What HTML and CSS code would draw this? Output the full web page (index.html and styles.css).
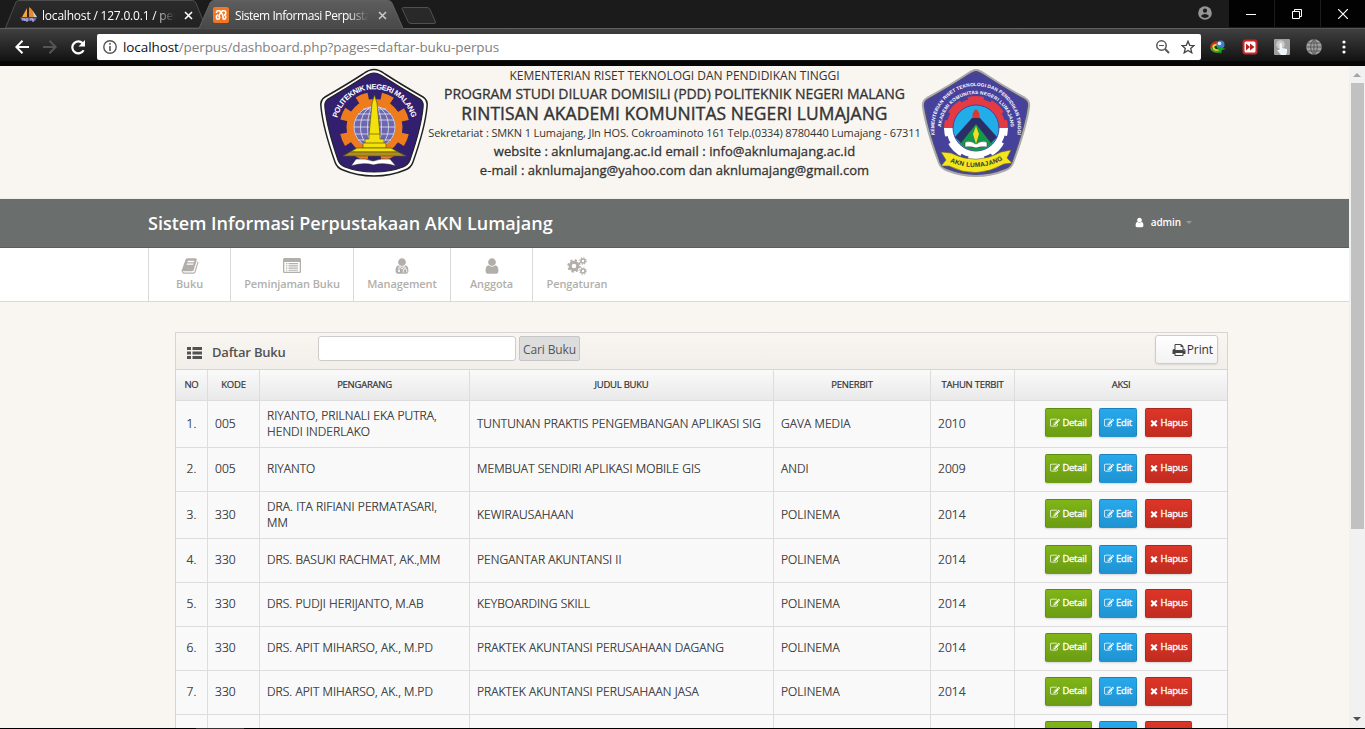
FILE: index.html
```html
<!DOCTYPE html>
<html lang="id">
<head>
<meta charset="utf-8">
<title>Sistem Informasi Perpustakaan</title>
<link rel="stylesheet" href="styles.css">
</head>
<body>
<svg class="defs" width="0" height="0">
  <symbol id="edit" viewBox="0 0 1792 1792"><path d="M888 1184l116-116-152-152-116 116v56h96v96h56zm440-720q-16-16-33 1l-350 350q-17 17-1 33t33-1l350-350q17-17 1-33zm80 594v190q0 119-84.5 203.5t-203.5 84.5h-832q-119 0-203.5-84.5t-84.5-203.5v-832q0-119 84.5-203.5t203.5-84.5h832q63 0 117 25 15 7 18 23 3 17-9 29l-49 49q-14 14-32 8-23-6-45-6h-832q-66 0-113 47t-47 113v832q0 66 47 113t113 47h832q66 0 113-47t47-113v-126q0-13 9-22l64-64q15-15 35-7t20 29zm-96-738l288 288-672 672h-288v-288zm444 132l-92 92-288-288 92-92q28-28 68-28t68 28l152 152q28 28 28 68t-28 68z"/></symbol>
  <symbol id="times" viewBox="0 0 1792 1792"><path d="M1490 1322q0 40-28 68l-136 136q-28 28-68 28t-68-28l-294-294-294 294q-28 28-68 28t-68-28l-136-136q-28-28-28-68t28-68l294-294-294-294q-28-28-28-68t28-68l136-136q28-28 68-28t68 28l294 294 294-294q28-28 68-28t68 28l136 136q28 28 28 68t-28 68l-294 294 294 294q28 28 28 68z"/></symbol>
  <symbol id="print" viewBox="0 0 1792 1792"><path d="M448 1536h896v-256h-896v256zm0-640h896v-384h-160q-40 0-68-28t-28-68v-160h-640v640zm1152 64q0-26-19-45t-45-19-45 19-19 45 19 45 45 19 45-19 19-45zm128 0v416q0 13-9.500 22.500t-22.500 9.500h-224v160q0 40-28 68t-68 28h-960q-40 0-68-28t-28-68v-160h-224q-13 0-22.500-9.500t-9.500-22.500v-416q0-79 56.500-135.500t135.500-56.500h64v-544q0-40 28-68t68-28h672q40 0 88 20t76 48l152 152q28 28 48 76t20 88v256h64q79 0 135.500 56.500t56.500 135.500z"/></symbol>
  <symbol id="user" viewBox="0 0 1792 1792"><path d="M1536 1399q0 109-62.500 187t-150.500 78h-854q-88 0-150.500-78t-62.500-187q0-85 8.500-160.500t31.500-152 58.500-131 94-89 134.500-34.500q131 128 313 128t313-128q76 0 134.500 34.500t94 89 58.500 131 31.500 152 8.500 160.500zm-256-887q0 159-112.500 271.500t-271.500 112.500-271.500-112.500-112.500-271.500 112.500-271.500 271.500-112.500 271.500 112.500 112.500 271.500z"/></symbol>
  <symbol id="book" viewBox="0 0 1792 1792"><path d="M1703 478q40 57 18 129l-275 906q-19 64-76.500 107.500t-122.500 43.500h-923q-77 0-148.500-53.500t-99.500-131.500q-24-67-2-127 0-4 3-27t4-37q1-8-3-21.500t-3-19.500q2-11 8-21t16.500-23.500 16.500-23.500q23-38 45-91.500t30-91.500q3-10 .5-30t-.5-28q3-11 17-28t17-23q21-36 42-92t25-90q1-9-2.500-32t.5-28q4-13 22-30.500t22-22.500q19-26 42.500-84.500t27.500-96.500q1-8-3-25.500t-2-26.500q2-8 9-18t18-23 17-21q8-12 16.500-30.500t15-35 16-36 19.500-32 26.500-23.500 36-11.500 47.500 5.500l-1 3q38-9 51-9h761q74 0 114 56t18 130l-274 906q-36 119-71.500 153.500t-128.500 34.500h-869q-27 0-38 15-11 16-1 43 24 70 144 70h923q29 0 56-15.500t35-41.500l300-987q7-22 5-57 38 15 59 43zm-1064 2q-4 13 2 22.500t20 9.500h608q13 0 25.500-9.500t16.500-22.500l21-64q4-13-2-22.500t-20-9.500h-608q-13 0-25.500 9.500t-16.500 22.500zm-83 256q-4 13 2 22.500t20 9.500h608q13 0 25.500-9.500t16.500-22.500l21-64q4-13-2-22.500t-20-9.500h-608q-13 0-25.500 9.500t-16.500 22.500z"/></symbol>
</svg>

<div class="browser">
  <div class="tabstrip">
    <svg class="tabshapes" width="1229" height="29" viewBox="0 0 1229 29">
      <defs>
        <linearGradient id="tabOn" x2="0" y2="1"><stop stop-color="#5e5e5e"/><stop offset="1" stop-color="#484848"/></linearGradient>
        <linearGradient id="tabOff" x2="0" y2="1"><stop stop-color="#2b2b2b"/><stop offset="1" stop-color="#222"/></linearGradient>
      </defs>
      <path d="M5.500 28L16 2Q17 .5 19 .5H192Q195 .5 196 3L206 28Z" fill="url(#tabOff)" stroke="#4c4c4c"/>
      <path d="M402 8.500Q402 7.500 404 7.500H427Q429 7.500 430 9.500L435.500 22Q436 23.500 434 23.500H411Q409 23.500 408 21.500Z" fill="#292929" stroke="#505050"/>
      <path d="M0 28.500H199L210 3Q211 .5 214 .5H388Q391 .5 392 3L403 28.500H1229" fill="url(#tabOn)" stroke="#606060"/>
    </svg>
    <div class="tab tab-a">
      <svg width="18" height="16" viewBox="0 0 18 16"><path d="M7 1L2 10H7Z" fill="#f5a33a"/><path d="M9 0V10H15Q14 3 9 0Z" fill="#e8892a"/><path d="M13 4L17 10H14Z" fill="#c7d0e0"/><path d="M0 10.500L2 14H15L17 10.500Z" fill="#6c6a9c"/><path d="M2 12h3v2M7 11v4M10 12h3v3" stroke="#c9c8e8" fill="none"/></svg>
      <span class="tabtitle">localhost / 127.0.0.1 / perpus</span>
      <svg class="x" width="9" height="9" viewBox="0 0 9 9"><path d="M1 1L8 8M8 1L1 8" stroke="#fff" stroke-width="1.600"/></svg>
    </div>
    <div class="tab tab-b">
      <svg width="16" height="16" viewBox="0 0 16 16"><rect width="16" height="16" rx="2" fill="#f37623"/><path d="M3.500 6V5.200Q3.500 3.800 5 3.800H6Q7 3.800 7.500 4.800L9.200 7Q10 8 10 10V10.500Q10 12.200 11.200 12.200T12.700 10.500V10Q12.700 8 11 8Q12.700 8 12.700 6V5.300Q12.700 3.800 11 3.800H10Q9 3.800 8.500 4.800L6.800 7Q6 8 6 10M5 8Q3.500 8 3.500 10V10.700Q3.500 12.200 5 12.200T6.500 10.700V9.500" stroke="#fff" stroke-width="1.600" fill="none"/></svg>
      <span class="tabtitle">Sistem Informasi Perpustakaan</span>
      <svg class="x" width="9" height="9" viewBox="0 0 9 9"><path d="M1 1L8 8M8 1L1 8" stroke="#ccc" stroke-width="1.500"/></svg>
    </div>
    <svg class="profile" width="14" height="14" viewBox="0 0 14 14"><circle cx="7" cy="7" r="6.800" fill="#969696"/><circle cx="7" cy="4.700" r="2.100" fill="#1b1b1b"/><path d="M2.800 10Q7 6 11.200 10Q7 14 2.800 10Z" fill="#1b1b1b"/></svg>
    <div class="win"><svg width="10" height="10"><path d="M0 5.500H10" stroke="#fff"/></svg></div>
    <div class="win"><svg width="10" height="10" fill="none" stroke="#fff"><path d="M.5 2.500H7.500V9.500H.5ZM2.500 2.500V.5H9.500V7.500H7.500"/></svg></div>
    <div class="win win-last"><svg width="10" height="10"><path d="M0 0L10 10M10 0L0 10" stroke="#fff" stroke-width="1.200"/></svg></div>
  </div>
  <div class="toolbar">
    <svg width="14" height="14" viewBox="0 0 14 14" fill="none" stroke="#fff" stroke-width="2"><path d="M14 7H1.500M7.500 .8L1.300 7L7.500 13.200"/></svg>
    <svg width="14" height="14" viewBox="0 0 14 14" fill="none" stroke="#555" stroke-width="2"><path d="M0 7H12.500M6.500 .8L12.700 7L6.500 13.200"/></svg>
    <svg width="15" height="15" viewBox="0 0 15 15"><path d="M12.600 10.200A6 6 0 1 1 11.700 3.200" fill="none" stroke="#fff" stroke-width="2.200"/><path d="M14 0V6.500H7.500Z" fill="#fff"/></svg>
    <div class="omnibox">
      <svg width="14" height="14" viewBox="0 0 14 14"><circle cx="7" cy="7" r="6.200" fill="none" stroke="#555" stroke-width="1.400"/><path d="M7 3V4.700M7 6V11" stroke="#555" stroke-width="1.600"/></svg>
      <span class="url"><b>localhost</b>/perpus/dashboard.php?pages=daftar-buku-perpus</span>
      <svg class="mag" width="14" height="14" viewBox="0 0 14 14" fill="none" stroke="#555"><circle cx="5.500" cy="5.500" r="4.700" stroke-width="1.500"/><path d="M9 9L13 13" stroke-width="2"/><path d="M3 5.500H8"/></svg>
      <svg width="14" height="14" viewBox="0 0 14 14"><path d="M7 1.200L8.700 5.300L13 5.600L9.700 8.400L10.800 12.800L7 10.400L3.200 12.800L4.300 8.400L1 5.600L5.300 5.300Z" fill="none" stroke="#444" stroke-width="1.300"/></svg>
    </div>
    <div class="exts">
      <svg width="16" height="14" viewBox="0 0 16 14"><path d="M7 2Q1 3 1.200 8" fill="none" stroke="#d92b20" stroke-width="2"/><path d="M7 4.500Q2.500 5 3.500 8T9 10" fill="none" stroke="#e9d22c" stroke-width="2.200"/><path d="M1 8Q3 13 10 11.500" fill="none" stroke="#35a735" stroke-width="2"/><circle cx="10.500" cy="4.500" r="4" fill="#3f7fd0"/><circle cx="9.500" cy="3.500" r="1.800" fill="#d9ecff"/><path d="M6 6L16 9L12 10L11 14Z" fill="#16a51d"/></svg>
      <svg width="16" height="16" viewBox="0 0 16 16"><rect x=".5" y=".5" width="15" height="15" rx="3" fill="#c92927"/><rect x="2.500" y="2.500" width="11" height="11" rx="1.500" fill="#fff"/><path d="M4 4.500L8 8L4 11.500ZM8 4.500L12.500 8L8 11.500Z" fill="#ba201f"/></svg>
      <svg width="16" height="16" viewBox="0 0 16 16"><rect width="16" height="16" rx="1" fill="#a0a0a0"/><circle cx="6.500" cy="5.500" r="4.300" fill="#c9c9c9"/><path d="M5.500 5Q6.800 3 8 5V9L13 10V13L12 16H7L3 11L5.500 11Z" fill="#eef5fa"/></svg>
      <svg width="16" height="16" viewBox="0 0 16 16"><circle cx="8" cy="8" r="7.800" fill="#a0a0a0"/><path d="M8 0V16M0 8H16M1.500 4H14.500M1.500 12H14.500M8 0Q1 8 8 16M8 0Q15 8 8 16" stroke="#4d4d4d" fill="none" stroke-width=".8"/></svg>
      <svg width="4" height="14" viewBox="0 0 4 14" fill="#fff"><circle cx="2" cy="2" r="1.600"/><circle cx="2" cy="7" r="1.600"/><circle cx="2" cy="12" r="1.600"/></svg>
    </div>
  </div>
</div>

<div class="viewport">
  <div class="page">
    <header class="letterhead">
      <svg class="logo" width="110" height="110" viewBox="0 0 110 110">
        <path d="M55 1.500Q60 1.500 66 6Q83 17 104 29Q109 32 108 39Q106 60 94 94Q92 100 86 102Q72 108 55 108Q38 108 24 102Q18 100 16 94Q4 60 2 39Q1 32 6 29Q27 17 44 6Q50 1.500 55 1.500Z" fill="#fff" stroke="#222" stroke-width="1.500"/>
        <path d="M55 5Q59 5 65 9Q82 20 101 31Q105 34 104 40Q102 60 91 92Q89 97 84 99Q71 104 55 104Q39 104 26 99Q21 97 19 92Q8 60 6 40Q5 34 9 31Q28 20 45 9Q51 5 55 5Z" fill="#32206f" stroke="#222" stroke-width="1.200"/>
        <circle cx="55.500" cy="59" r="30" fill="none" stroke="#ef7c1c" stroke-width="10" stroke-dasharray="11 12.560" stroke-dashoffset="-6.300"/>
        <circle cx="55.500" cy="59" r="24.500" fill="#6d68ad" stroke="#ef7c1c" stroke-width="7"/>
        <g fill="none" stroke="#e4e3f3" stroke-width=".8"><circle cx="55.500" cy="59" r="20.500"/><ellipse cx="55.500" cy="59" rx="7" ry="20.500"/><ellipse cx="55.500" cy="59" rx="14" ry="20.500"/><path d="M35 59H76M36 52H75M39 46H72M39 72H72M44 41H67M36 66H75"/></g>
        <path d="M32 98L37 91Q47 90 54 93Q62 90 71 91L77 98Q64 94 54.500 97Q45 94 32 98Z" fill="#fff" stroke="#222" stroke-width=".6"/>
        <g stroke="#5b5413" stroke-width=".7"><path d="M55.500 27L58 35L61 67H50L53 35Z" fill="#f4e10c"/><path d="M50 66H61V71H65V75H67V80H44V75H46V71H50Z" fill="#f4e10c"/><path d="M46 75H65" /><path d="M38 80H72L79 84H31Z" fill="#f4e10c"/><path d="M31 84H79L87 88H24Z" fill="#a9911b"/></g>
        <path id="arcL" d="M18 51A38.500 38.500 0 0 1 93 51" fill="none"/>
        <text class="ltext" font-size="7.600" fill="#fff"><textPath href="#arcL" startOffset="1" textLength="101">POLITEKNIK NEGERI MALANG</textPath></text>
      </svg>
      <div class="lines">
        <p class="l1"><span>KEMENTERIAN RISET TEKNOLOGI DAN PENDIDIKAN TINGGI</span></p>
        <p class="l2"><span>PROGRAM STUDI DILUAR DOMISILI (PDD) POLITEKNIK NEGERI MALANG</span></p>
        <p class="l3"><span>RINTISAN AKADEMI KOMUNITAS NEGERI LUMAJANG</span></p>
        <p class="l4"><span>Sekretariat : SMKN 1 Lumajang, Jln HOS. Cokroaminoto 161 Telp.(0334) 8780440 Lumajang - 67311</span></p>
        <p class="l5"><span>website : aknlumajang.ac.id email : info@aknlumajang.ac.id</span></p>
        <p class="l6"><span>e-mail : aknlumajang@yahoo.com dan aknlumajang@gmail.com</span></p>
      </div>
      <svg class="logo" width="110" height="110" viewBox="0 0 110 110">
        <path d="M55 2Q58 2 64 6Q82 18 104 30Q109 33 108 39Q105 60 92 95Q90 100 85 102Q70 108 55 108Q40 108 25 102Q20 100 18 95Q5 60 2 39Q1 33 6 30Q28 18 46 6Q52 2 55 2Z" fill="#46429b" stroke="#aaa" stroke-width="2"/>
        <path d="M55 4Q58 4 64 8Q82 20 103 31Q107 34 106 39Q103 60 91 94Q89 98 84 100Q70 106 55 106Q40 106 26 100Q21 98 19 94Q7 60 4 39Q3 34 7 31Q28 20 46 8Q52 4 55 4Z" fill="none" stroke="#555" stroke-width=".6"/>
        <path d="M23 60A32 32 0 0 1 87 60Z" fill="#e33a43"/><path d="M23 60A32 32 0 0 0 87 60Z" fill="#fff"/>
        <circle cx="55" cy="60" r="31.500" fill="none" stroke="#46429b" stroke-width="4" stroke-dasharray="8 16.740" stroke-dashoffset="-8"/>
        <circle cx="55" cy="60" r="23" fill="#21ade8" stroke="#46429b"/>
        <path d="M38 75L55 48L72 75Q64 82 55 83Q46 82 38 75Z" fill="#14994b"/>
        <path d="M34 69L51 50Q55 47 59 50L76 69L70 75L55 56L40 75Z" fill="#2d2d67"/>
        <path d="M52 50Q50 45 55 41Q60 45 58 50Z" fill="#e0352b"/><path d="M55 58L58 66L55 76L52 66Z" fill="#f1dd25"/>
        <path d="M44 74Q50 72 55 76Q60 72 66 74V79Q60 78 55 80Q50 78 44 79Z" fill="#fff" stroke="#333" stroke-width=".5"/>
        <path d="M20 84L30 85Q55 98 80 84L90 82L86 90L91 95L83 96Q55 112 28 98L20 98L25 92Z" fill="#f4e51e" stroke="#6f6a1e" stroke-width=".6"/>
        <path id="arcO" d="M14 68A41.800 41.800 0 1 1 96 68" fill="none"/><path id="arcI" d="M20 61A35 35 0 0 1 90 61" fill="none"/><path id="rib" d="M27 93Q55 106 84 91" fill="none"/>
        <text class="ltext" font-size="4.800" fill="#fff"><textPath href="#arcO" startOffset="1" textLength="145">KEMENTERIAN RISET TEKNOLOGI DAN PENDIDIKAN TINGGI</textPath></text>
        <text class="ltext" font-size="4.800" fill="#fff"><textPath href="#arcI" startOffset="2" textLength="106">AKADEMI KOMUNITAS NEGERI LUMAJANG</textPath></text>
        <text class="ltext" font-size="6.500" fill="#333"><textPath href="#rib" startOffset="2" textLength="55">AKN LUMAJANG</textPath></text>
      </svg>
    </header>

    <div class="brandbar">
      <div class="brand"><span>Sistem Informasi Perpustakaan AKN Lumajang</span></div>
      <div class="account"><svg width="11" height="11" fill="#fff"><use href="#user"/></svg><span>admin</span><i class="caret"></i></div>
    </div>

    <nav class="mainnav">
      <a class="n1"><svg width="18" height="18"><use href="#book"/></svg><span>Buku</span></a>
      <a class="n2"><svg width="18" height="18" viewBox="0 0 18 18"><path fill-rule="evenodd" d="M1.500 1H16.500Q18 1 18 2.500V14.500Q18 16 16.500 16H1.500Q0 16 0 14.500V2.500Q0 1 1.500 1ZM1.300 5V14.700H16.700V5Z"/><path d="M3 6h1.300v1.200H3zM3 8.300h1.300v1.200H3zM3 10.600h1.300v1.200H3zM3 12.700h1.300v1H3zM5.500 6H15v1.200H5.500zM5.500 8.300H15v1.200H5.500zM5.500 10.600H15v1.200H5.500zM5.500 12.700H15v1H5.500z"/></svg><span>Peminjaman Buku</span></a>
      <a class="n3"><svg width="18" height="18"><use href="#user"/><path d="M6 9.500V13M12 9.500V11.500M10.300 15.500V13.500Q10.300 11.800 12 11.800T13.700 13.500V15.500M6.500 9L9 12L11.500 9" fill="none" stroke="#fff" stroke-width=".9"/><circle cx="6" cy="14" r="1.100" fill="#fff"/></svg><span>Management</span></a>
      <a class="n4"><svg width="18" height="18"><use href="#user"/></svg><span>Anggota</span></a>
      <a class="n5"><svg width="20" height="18" viewBox="0 0 20 18" fill="none" stroke="#b2afaa"><circle cx="7" cy="9" r="3.800" stroke-width="3"/><circle cx="7" cy="9" r="5.800" stroke-width="1.800" stroke-dasharray="2.300 2.255"/><circle cx="16" cy="4" r="2" stroke-width="1.600"/><circle cx="16" cy="4" r="3.200" stroke-width="1.200" stroke-dasharray="1.250 1.263"/><circle cx="16" cy="14" r="2" stroke-width="1.600"/><circle cx="16" cy="14" r="3.200" stroke-width="1.200" stroke-dasharray="1.250 1.263"/></svg><span>Pengaturan</span></a>
    </nav>

    <section class="panel">
      <div class="panelhead">
        <svg width="15" height="12" viewBox="0 0 15 12" fill="#525252"><path d="M0 0h4v3H0zM5.500 0H15v3H5.500zM0 4.500h4v3H0zM5.500 4.500H15v3H5.500zM0 9h4v3H0zM5.500 9H15v3H5.500z"/></svg>
        <h3>Daftar Buku</h3>
        <input class="search" type="text" aria-label="Cari">
        <button class="cari">Cari Buku</button>
        <a class="print"><svg width="14" height="14"><use href="#print"/></svg>Print</a>
      </div>
      <table>
        <colgroup><col class="c1"><col class="c2"><col class="c3"><col class="c4"><col class="c5"><col class="c6"><col class="c7"></colgroup>
        <thead><tr><th>NO</th><th>KODE</th><th>PENGARANG</th><th>JUDUL BUKU</th><th>PENERBIT</th><th>TAHUN TERBIT</th><th>AKSI</th></tr></thead>
        <tbody>
          <tr class="tall"><td>1.</td><td>005</td><td>RIYANTO, PRILNALI EKA PUTRA,<br>HENDI INDERLAKO</td><td>TUNTUNAN PRAKTIS PENGEMBANGAN APLIKASI SIG</td><td>GAVA MEDIA</td><td>2010</td><td><div class="acts"><a class="b green"><svg><use href="#edit"/></svg>Detail</a><a class="b blue"><svg><use href="#edit"/></svg>Edit</a><a class="b red"><svg><use href="#times"/></svg>Hapus</a></div></td></tr>
          <tr><td>2.</td><td>005</td><td>RIYANTO</td><td>MEMBUAT SENDIRI APLIKASI MOBILE GIS</td><td>ANDI</td><td>2009</td><td><div class="acts"><a class="b green"><svg><use href="#edit"/></svg>Detail</a><a class="b blue"><svg><use href="#edit"/></svg>Edit</a><a class="b red"><svg><use href="#times"/></svg>Hapus</a></div></td></tr>
          <tr class="tall"><td>3.</td><td>330</td><td>DRA. ITA RIFIANI PERMATASARI,<br>MM</td><td>KEWIRAUSAHAAN</td><td>POLINEMA</td><td>2014</td><td><div class="acts"><a class="b green"><svg><use href="#edit"/></svg>Detail</a><a class="b blue"><svg><use href="#edit"/></svg>Edit</a><a class="b red"><svg><use href="#times"/></svg>Hapus</a></div></td></tr>
          <tr><td>4.</td><td>330</td><td>DRS. BASUKI RACHMAT, AK.,MM</td><td>PENGANTAR AKUNTANSI II</td><td>POLINEMA</td><td>2014</td><td><div class="acts"><a class="b green"><svg><use href="#edit"/></svg>Detail</a><a class="b blue"><svg><use href="#edit"/></svg>Edit</a><a class="b red"><svg><use href="#times"/></svg>Hapus</a></div></td></tr>
          <tr><td>5.</td><td>330</td><td>DRS. PUDJI HERIJANTO, M.AB</td><td>KEYBOARDING SKILL</td><td>POLINEMA</td><td>2014</td><td><div class="acts"><a class="b green"><svg><use href="#edit"/></svg>Detail</a><a class="b blue"><svg><use href="#edit"/></svg>Edit</a><a class="b red"><svg><use href="#times"/></svg>Hapus</a></div></td></tr>
          <tr><td>6.</td><td>330</td><td>DRS. APIT MIHARSO, AK., M.PD</td><td>PRAKTEK AKUNTANSI PERUSAHAAN DAGANG</td><td>POLINEMA</td><td>2014</td><td><div class="acts"><a class="b green"><svg><use href="#edit"/></svg>Detail</a><a class="b blue"><svg><use href="#edit"/></svg>Edit</a><a class="b red"><svg><use href="#times"/></svg>Hapus</a></div></td></tr>
          <tr><td>7.</td><td>330</td><td>DRS. APIT MIHARSO, AK., M.PD</td><td>PRAKTEK AKUNTANSI PERUSAHAAN JASA</td><td>POLINEMA</td><td>2014</td><td><div class="acts"><a class="b green"><svg><use href="#edit"/></svg>Detail</a><a class="b blue"><svg><use href="#edit"/></svg>Edit</a><a class="b red"><svg><use href="#times"/></svg>Hapus</a></div></td></tr>
          <tr><td></td><td></td><td></td><td></td><td></td><td></td><td><div class="acts"><a class="b green"></a><a class="b blue"></a><a class="b red"></a></div></td></tr>
        </tbody>
      </table>
    </section>
  </div>
  <div class="scrollbar"><i class="up"></i><i class="thumb"></i><i class="down"></i></div>
</div>
<div class="taskline"><i></i></div>
</body>
</html>
```
FILE: styles.css
```css
* { box-sizing: border-box; }
body { margin: 0; width: 1365px; height: 729px; overflow: hidden; background: #000; font-family: "Open Sans", sans-serif; color: #333; display: flex; flex-direction: column; }
svg { flex: none; display: block; }
.defs { position: absolute; }
p, h3 { margin: 0; font-weight: normal; }

.browser { height: 66px; flex: none; background: #060606; }
.tabstrip { position: relative; height: 28px; display: flex; align-items: flex-start; background: #1b1b1b; }
.tabshapes { position: absolute; left: 0; top: 0; }
.tab { position: relative; display: flex; align-items: center; height: 30px; color: #fff; font-size: 12px; }
.tab-a { width: 193px; padding-left: 20px; }
.tab-b { width: 195px; padding-left: 20px; }
.tabtitle { width: 134px; margin-left: 5px; overflow: hidden; white-space: nowrap; letter-spacing: -.15px; -webkit-mask-image: linear-gradient(90deg, #000 84%, transparent); mask-image: linear-gradient(90deg, #000 84%, transparent); }
.tab-a .tabtitle { margin-left: 4px; letter-spacing: -.2px; }
.tab-b .tabtitle { letter-spacing: -.45px; margin-left: 6px; }
.x { margin-left: 9px; }
.profile { margin: 6px 17px 0 auto; position: relative; }
.win { width: 46px; height: 27px; background: #020202; border-right: 1px solid #1c1c1c; display: flex; align-items: center; justify-content: center; padding-right: 2px; }
.win-last { width: 44px; border: 0; padding: 0; }
.toolbar { height: 33px; display: flex; align-items: center; padding: 4px 0 0 15px; background: linear-gradient(#404040, #121212); border-top: 1px solid #555; }
.toolbar > svg { margin-right: 14px; }
.toolbar > svg:nth-child(3) { margin-right: 11px; }
.omnibox { width: 1104px; height: 26px; background: #fff; border-radius: 2px; display: flex; align-items: center; padding: 0 6px 0 6px; }
.url { margin-left: 6px; font-size: 13.500px; color: #808080; letter-spacing: -.09px; }
.url b { font-weight: normal; color: #111; }
.mag { margin-left: auto; margin-right: 11px; }
.exts { flex: 1; display: flex; align-items: center; gap: 16px; padding-left: 9px; }
.exts svg:last-child { margin-left: 4px; }

.viewport { flex: 1; min-height: 0; display: flex; overflow: hidden; }
.page { width: 1349px; background: #f9f6f1; overflow: hidden; }
.letterhead { height: 133px; border-bottom: 1px solid #efeeec; display: flex; justify-content: center; padding-top: 2px; }
.ltext { font-family: "Liberation Sans", sans-serif; font-weight: bold; }
.lines { width: 492px; text-align: center; white-space: nowrap; color: #333; display: flex; flex-direction: column; align-items: center; }
.l1 { font-size: 12px; line-height: 16px; }
.l2 { font-size: 14px; line-height: 20px; letter-spacing: -.06px; -webkit-text-stroke: .3px #333; }
.l3 { font-size: 17.400px; line-height: 20px; letter-spacing: .12px; -webkit-text-stroke: .4px #333; }
.l3 span { position: relative; top: -1px; }
.l4 { font-size: 11px; line-height: 18px; letter-spacing: -.11px; }
.l5, .l6 { font-size: 13px; line-height: 19px; letter-spacing: .06px; -webkit-text-stroke: .3px #333; }
.brandbar { height: 49px; background: #6a6e6d; border-bottom: 1px solid #5b5d5c; display: flex; align-items: center; padding: 0 157px 0 148px; justify-content: space-between; }
.brand { color: #fff; font-size: 18px; font-weight: 600; white-space: nowrap; }
.account { display: flex; align-items: center; color: #fff; font-size: 10px; font-weight: 600; letter-spacing: -.1px; gap: 6px; padding-bottom: 2px; }
.caret { border: 3px solid transparent; border-top-color: #999; border-bottom: 0; margin-left: -1px; }
.mainnav { height: 54px; background: #fff; border-bottom: 1px solid #d9d9d9; display: flex; padding-left: 148px; }
.mainnav a { border-left: 1px solid #d9d9d9; display: flex; flex-direction: column; align-items: center; padding-top: 9px; color: #b2afaa; fill: #b2afaa; font-size: 11px; font-weight: 600; line-height: 18px; white-space: nowrap; letter-spacing: -.12px; }
.n1 { width: 82px; } .n2 { width: 123px; } .n3 { width: 97px; } .n4 { width: 82px; } .n5 { width: 89px; }

.panel { width: 1053px; margin: 30px 0 0 175px; border: 1px solid #d5d5d5; border-bottom: 0; }
.panelhead { height: 36px; display: flex; background: linear-gradient(#f9f6f1, #f2efea); align-items: flex-start; padding: 0 9px 0 11px; white-space: nowrap; }
.panelhead > svg { margin-top: 14px; }
h3 { width: 107px; margin-left: 10px; line-height: 38px; font-size: 13px; font-weight: 600; color: #525252; letter-spacing: -.22px; }
.search { width: 198px; height: 25px; margin: 3px 3px 0 -1px; border: 1px solid #ccc; border-radius: 3px; background: #fff; padding: 0; }
.cari { width: 61px; height: 25px; margin-top: 3px; padding: 2px 0 0; border: 1px solid #c6c6c6; border-radius: 2px; background: #ddd; color: #555; font: 12px "Open Sans", sans-serif; letter-spacing: -.1px; }
.print { width: 63px; height: 29px; margin: 2px 0 0 auto; border: 1px solid #ccc; border-radius: 3px; background: linear-gradient(#fff, #f3f3f3); box-shadow: 0 1px 2px rgba(0,0,0,.1); display: flex; align-items: center; justify-content: flex-end; padding-right: 4px; gap: 1px; font-size: 12px; letter-spacing: -.1px; color: #333; fill: #444; }
table { width: 1051px; table-layout: fixed; border-collapse: separate; border-spacing: 0; border-top: 1px solid #d5d5d5; font-size: 12px; background: #f9f9f9; }
.c1 { width: 32px; } .c2 { width: 52px; } .c3 { width: 210px; } .c4 { width: 304px; } .c5 { width: 157px; } .c6 { width: 84px; } .c7 { width: 212px; }
th, td { border-right: 1px solid #ddd; border-bottom: 1px solid #ddd; padding: 0 7px; text-align: left; white-space: nowrap; }
th:last-child, td:last-child { border-right: 0; }
th { height: 31px; background: linear-gradient(#fafafa, #e9e9e9); font-size: 9.500px; font-weight: 400; letter-spacing: -.25px; text-align: center; color: #333; -webkit-text-stroke: .2px #333; padding: 0 0 2px; }
td { height: 44px; line-height: 16px; color: #222; font-weight: 300; letter-spacing: .07px; -webkit-text-stroke: .2px #222; padding-bottom: 1px; }
td:first-child { text-align: center; padding: 0 0 1px; }
td:last-child { padding-bottom: 3px; }
.tall td { height: 47px; }
.acts { display: flex; padding-left: 23px; }
.b { height: 29px; width: 47px; margin-right: 8px; border-radius: 2px; border: 1px solid rgba(0,0,0,.12); box-shadow: 0 1px 2px rgba(0,0,0,.15); color: #fff; fill: #fff; font-size: 9.500px; font-weight: 400; letter-spacing: -.25px; -webkit-text-stroke: .3px #fff; display: flex; align-items: center; justify-content: center; gap: 2px; }
.b svg { width: 10px; height: 10px; }
.green { margin-right: 7px; background: linear-gradient(#7fb518, #6c9c14); }
.blue { width: 38px; background: linear-gradient(#27a9ec, #1f93d2); }
.red { background: linear-gradient(#de3528, #c02c20); }
.red svg { margin-right: -1px; }

.scrollbar { width: 16px; background: #f1f1f1; display: flex; flex-direction: column; align-items: center; }
.up { border: 4px solid transparent; border-top: 0; border-bottom-color: #a3a3a3; margin-top: 7px; height: 4px; }
.thumb { width: 13px; height: 446px; margin-top: 6px; background: #c1c1c1; }
.down { border: 4px solid transparent; border-bottom: 0; border-top-color: #505050; height: 4px; margin: auto 0 7px; }
.taskline { height: 1px; background: #000; padding-left: 196px; }
.taskline i { display: block; width: 48px; height: 1px; background: #333; }
```
